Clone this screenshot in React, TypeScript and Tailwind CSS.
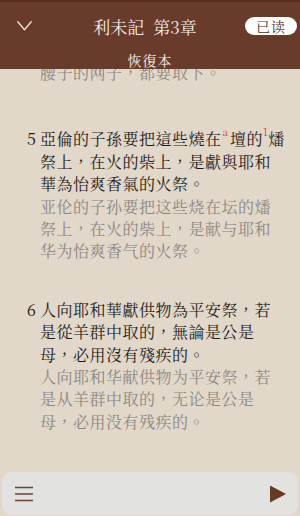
import React from "react";

const cjk = '"Noto Serif CJK TC", "Noto Sans CJK TC", "Noto Sans CJK SC", serif';

type Verse = {
  num: string;
  trad: React.ReactNode;
  simp: string;
};

const verses: Verse[] = [
  {
    num: "5",
    trad: (
      <>
        亞倫的子孫要把這些燒在
        <sup className="text-[10px] text-[#e23b32] -top-[9px] pl-[1px] pr-[2px] tracking-normal">a</sup>
        壇的
        <sup className="text-[10px] text-[#e23b32] -top-[9px] pr-[0.5px] tracking-normal">1</sup>
        燔祭上，在火的柴上，是獻與耶和華為怡爽香氣的火祭。
      </>
    ),
    simp: "亚伦的子孙要把这些烧在坛的燔祭上，在火的柴上，是献与耶和华为怡爽香气的火祭。",
  },
  {
    num: "6",
    trad: "人向耶和華獻供物為平安祭，若是從羊群中取的，無論是公是母，必用沒有殘疾的。",
    simp: "人向耶和华献供物为平安祭，若是从羊群中取的，无论是公是母，必用没有残疾的。",
  },
];

function VerseBlock({ v, first }: { v: Verse; first: boolean }) {
  return (
    <div className={`pl-[13px] ${first ? "mt-[44px]" : "mt-[36px]"}`}>
      <p className="text-[#1d1a17] -indent-[13px]">
        <span className="inline-block w-[13px] indent-0 tracking-normal">{v.num}</span>
        {v.trad}
      </p>
      <p className="text-[#8c8782]">{v.simp}</p>
    </div>
  );
}

export default function App() {
  return (
    <div
      className="h-[516px] w-[300px] flex flex-col overflow-hidden bg-[#e1d8ca]"
      style={{ fontFamily: cjk }}
    >
      {/* Header */}
      <header className="relative z-10 shrink-0 bg-[#683b2b] border-t-2 border-[#57301f] text-[#f6efe6]">
        <div className="h-[48px] flex items-center">
          <div className="pl-[17px] w-[32px] shrink-0">
            <svg width="15" height="10" viewBox="0 0 15 10" fill="none">
              <polyline
                points="0.8,0.8 7.5,8.8 14.2,0.8"
                stroke="#eadfd4"
                strokeWidth="1.4"
                strokeLinecap="round"
                strokeLinejoin="round"
              />
            </svg>
          </div>
          <div className="flex-1 flex justify-center pl-[13px] gap-[9px] text-[17px] leading-none">
            <span>利未記</span>
            <span>第3章</span>
          </div>
          <div className="pr-[3px] shrink-0">
            <div className="w-[52px] h-[18px] rounded-full bg-white text-[#5a3121] text-[14px] leading-none tracking-[1px] flex items-center justify-center">
              已读
            </div>
          </div>
        </div>
        <div className="h-[19px] flex items-center justify-center text-[14px] leading-none tracking-[1px]">
          恢復本
        </div>
      </header>

      {/* Reading area */}
      <main className="flex-1 overflow-hidden -mt-[7px] pl-[27px] pr-[13px] text-[16px] leading-[22.4px] tracking-[0.5px]">
        <p className="pl-[13px] text-[#8c8782]">腰子的网子，都要取下。</p>
        {verses.map((v, i) => (
          <VerseBlock key={v.num} v={v} first={i === 0} />
        ))}
      </main>

      {/* Bottom bar */}
      <nav className="shrink-0 h-[43px] mx-[2px] mb-[1px] rounded-[10px] bg-[#e2e2e1] flex items-center justify-between pl-[11px] pr-[11px]">
        <svg width="21" height="16" viewBox="0 0 21 16" fill="none">
          <path d="M2 1.5h18M2 8h18M2 14.5h18" stroke="#6b4333" strokeWidth="1.6" />
        </svg>
        <svg width="18" height="18" viewBox="0 0 18 18">
          <path d="M1 0.5L17 9L1 17.5Z" fill="#693923" />
        </svg>
      </nav>
    </div>
  );
}
